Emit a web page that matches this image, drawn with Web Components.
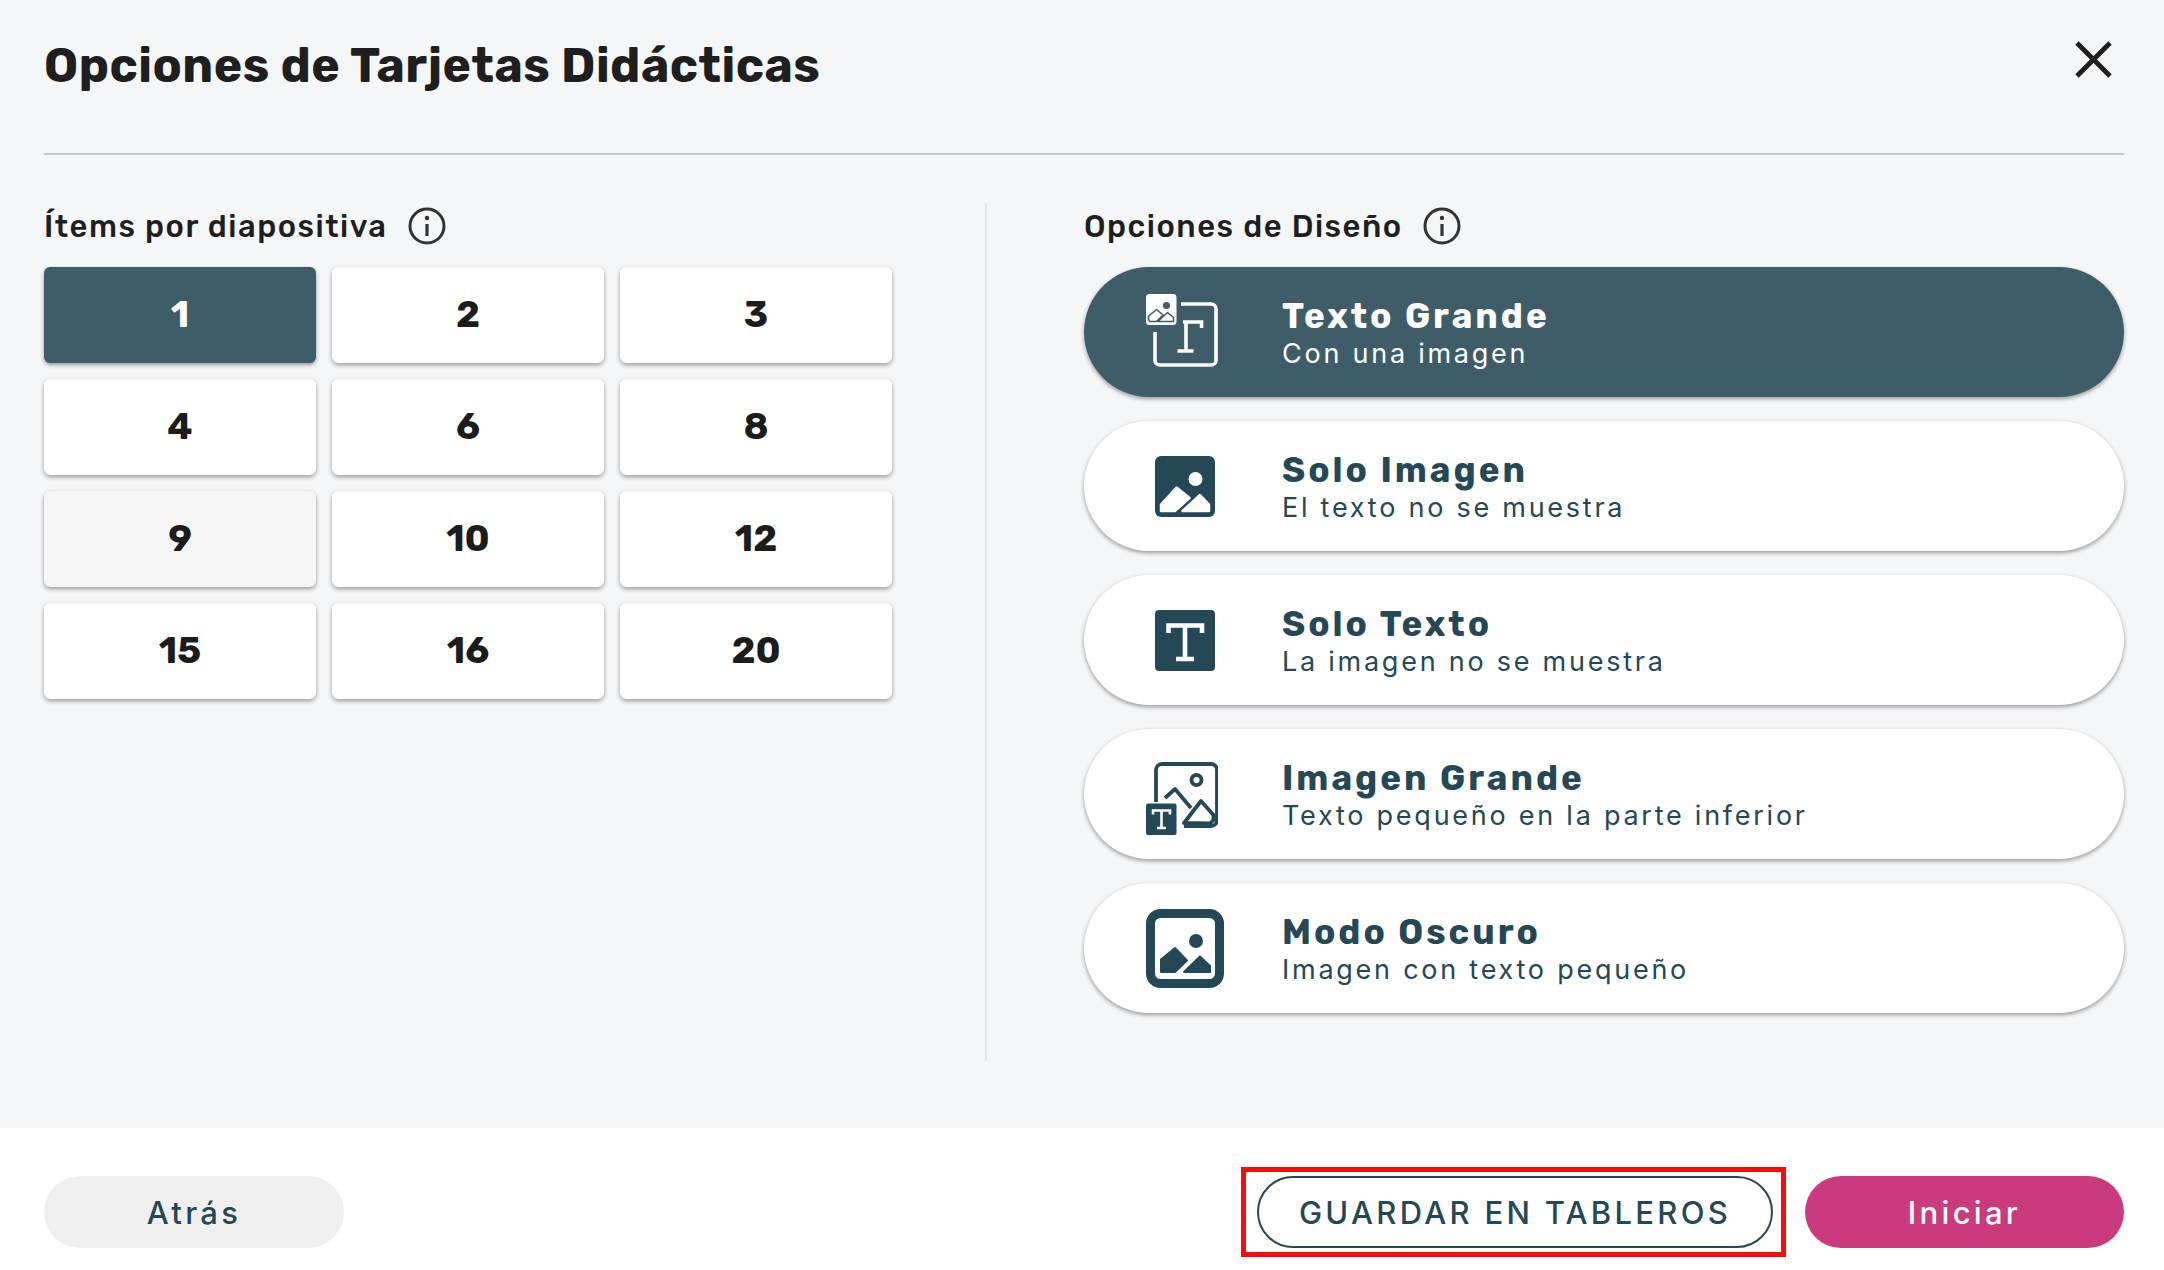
<!doctype html>
<html lang="es">
<head>
<meta charset="utf-8">
<title>Opciones de Tarjetas Didácticas</title>
<style>
  html, body { margin: 0; height: 100%; }
  body { font-family: Inter, "Liberation Sans", sans-serif; }
</style>
</head>
<body>
<flash-dialog>
  <span slot="title">Opciones de Tarjetas Didácticas</span>
  <flash-section slot="left" label="Ítems por diapositiva">
    <count-grid>
      <count-tile selected>1</count-tile>
      <count-tile>2</count-tile>
      <count-tile>3</count-tile>
      <count-tile>4</count-tile>
      <count-tile>6</count-tile>
      <count-tile>8</count-tile>
      <count-tile hover>9</count-tile>
      <count-tile>10</count-tile>
      <count-tile>12</count-tile>
      <count-tile>15</count-tile>
      <count-tile>16</count-tile>
      <count-tile>20</count-tile>
    </count-grid>
  </flash-section>
  <flash-section slot="right" label="Opciones de Diseño">
    <layout-list>
      <layout-pill selected heading="Texto Grande" sub="Con una imagen">
        <svg slot="icon" style="margin: 0 0 3px -6px" width="72" height="74" viewBox="0 0 72 74" fill="none">
          <path d="M35 10H65a5 5 0 0 1 5 5V66a5 5 0 0 1-5 5H14a5 5 0 0 1-5-5V38" stroke="#fff" stroke-width="3.6"/>
          <path d="M37 28H55.5V34M40 28V57M31.5 57H47.5" stroke="#fff" stroke-width="3.6"/>
          <rect width="30.5" height="31" rx="3.5" fill="#fff"/>
          <circle cx="20.5" cy="11.5" r="3.6" fill="#3f5d69"/>
          <path d="M2.5 25V22L10.5 15.5 17 21 10.5 27.5H3.5ZM12 27.5 21.5 18.5 27.5 23.5V27.5Z" fill="none" stroke="#3f5d69" stroke-width="1.6" stroke-linejoin="round"/>
        </svg>
      </layout-pill>
      <layout-pill heading="Solo Imagen" sub="El texto no se muestra">
        <svg slot="icon" width="60" height="61" viewBox="0 0 60 61">
          <rect width="60" height="61" rx="6" fill="#244855"/>
          <circle cx="40.5" cy="23" r="7" fill="#fff"/>
          <path d="M6 55V48.5L21.5 31.5 34.5 42 20 55ZM27.5 55 45 39 54 48.5V55Z" fill="#fff" stroke="#fff" stroke-width="2.5" stroke-linejoin="round"/>
        </svg>
      </layout-pill>
      <layout-pill heading="Solo Texto" sub="La imagen no se muestra">
        <svg slot="icon" width="60" height="61" viewBox="0 0 60 61">
          <rect width="60" height="61" rx="4" fill="#244855"/>
          <path d="M13.5 23V15.5H47V23M30 15.5V49M21 49H39" fill="none" stroke="#fff" stroke-width="4.6"/>
        </svg>
      </layout-pill>
      <layout-pill heading="Imagen Grande" sub="Texto pequeño en la parte inferior">
        <svg slot="icon" style="margin: 8px 0 0 -6px" width="72" height="73" viewBox="0 0 72 73" fill="none">
          <path d="M10 40V8a6 6 0 0 1 6-6H65a6 6 0 0 1 6 6V58a6 6 0 0 1-6 6H38" stroke="#244855" stroke-width="3.8"/>
          <circle cx="50.5" cy="18" r="5" stroke="#244855" stroke-width="3.8"/>
          <path d="M19 36 29 27 45 46M38 61 55 39 67.5 53V58L64 61.5Z" stroke="#244855" stroke-width="3.8" stroke-linejoin="round"/>
          <rect y="41.5" width="30.5" height="31.5" rx="2" fill="#244855"/>
          <path d="M7 52.5V48.5H24V52.5M15.5 48.5V66M11 66H20" stroke="#fff" stroke-width="2.6"/>
        </svg>
      </layout-pill>
      <layout-pill heading="Modo Oscuro" sub="Imagen con texto pequeño">
        <svg slot="icon" width="78" height="79" viewBox="0 0 78 79">
          <rect x="4.5" y="4.5" width="69" height="70" rx="10" fill="#fff" stroke="#244855" stroke-width="9"/>
          <circle cx="50" cy="32" r="7" fill="#244855"/>
          <path d="M15 63V50.5L29 39 41 51.5 29 63ZM38 63 54 47.5 64 57V63Z" fill="#244855" stroke="#244855" stroke-width="2" stroke-linejoin="round"/>
        </svg>
      </layout-pill>
    </layout-list>
  </flash-section>
  <app-button slot="back" variant="ghost">Atrás</app-button>
  <marked-box slot="actions"><app-button variant="outline" upper>GUARDAR EN TABLEROS</app-button></marked-box>
  <app-button slot="actions" variant="primary">Iniciar</app-button>
</flash-dialog>

<script>
const HEAD_FONT = 'Rubik, Roboto, Inter, "Liberation Sans", sans-serif'

class FlashDialog extends HTMLElement {
  constructor() {
    super()
    this.attachShadow({ mode: 'open' }).innerHTML = `
      <style>
        :host {
          display: grid;
          grid-template-rows: 1fr 142px;
          width: 2164px;
          height: 1270px;
          background: #f5f6f8;
          overflow: hidden;
        }
        .main { padding: 0 40px 0 44px; display: flex; flex-direction: column; }
        header {
          height: 155px;
          box-sizing: border-box;
          border-bottom: 2px solid #c3c5c8;
          display: flex;
          justify-content: space-between;
          align-items: flex-start;
          font: 700 48px ${HEAD_FONT};
          letter-spacing: .5px;
          color: #1f1f1f;
          padding-top: 37px;
        }
        header svg { margin: 4px 12px 0 0; }
        .columns {
          margin-top: 48px;
          display: grid;
          grid-template-columns: 943px 1fr;
          height: 858px;
        }
        .left { border-right: 2px solid #e3e4e6; padding-right: 93px; }
        .right { padding-left: 97px; }
        footer {
          background: #fff;
          padding: 39px 40px 0 44px;
          display: flex;
          align-items: flex-start;
          justify-content: space-between;
        }
        .actions { display: flex; gap: 19px; align-items: center; }
        ::slotted(app-button[slot="back"]) { margin-top: 9px; }
      </style>
      <div class="main">
        <header>
          <slot name="title"></slot>
          <svg width="37" height="37" viewBox="0 0 37 37"><path d="M2 2 35 35M35 2 2 35" stroke="#1f1f1f" stroke-width="4.8" fill="none"/></svg>
        </header>
        <div class="columns">
          <div class="left"><slot name="left"></slot></div>
          <div class="right"><slot name="right"></slot></div>
        </div>
      </div>
      <footer>
        <slot name="back"></slot>
        <div class="actions"><slot name="actions"></slot></div>
      </footer>`
  }
}

class FlashSection extends HTMLElement {
  constructor() {
    super()
    const root = this.attachShadow({ mode: 'open' })
    root.innerHTML = `
      <style>
        :host { display: block; }
        .label {
          height: 64px;
          display: flex;
          align-items: flex-start;
          gap: 20px;
          font: 500 31px/48px ${HEAD_FONT};
          letter-spacing: 1.5px;
          color: #1f1f1f;
        }
        svg { margin-top: 4px; }
      </style>
      <div class="label">
        <span></span>
        <svg width="38" height="38" viewBox="0 0 38 38" fill="none">
          <circle cx="19" cy="19" r="17" stroke="#333" stroke-width="3"/>
          <path d="M19 17V29" stroke="#333" stroke-width="3.2"/>
          <circle cx="19" cy="11" r="2.2" fill="#333"/>
        </svg>
      </div>
      <slot></slot>`
    root.querySelector('span').textContent = this.getAttribute('label')
  }
}

class CountGrid extends HTMLElement {
  constructor() {
    super()
    this.attachShadow({ mode: 'open' }).innerHTML = `
      <style>
        :host { display: grid; grid-template-columns: repeat(3, 272px); grid-auto-rows: 96px; gap: 16px; }
      </style>
      <slot></slot>`
  }
}

class CountTile extends HTMLElement {
  constructor() {
    super()
    this.attachShadow({ mode: 'open' }).innerHTML = `
      <style>
        :host {
          display: flex;
          align-items: center;
          justify-content: center;
          padding-bottom: 2px;
          box-sizing: border-box;
          background: #fff;
          border-radius: 6px;
          box-shadow: 0 2px 4px rgba(0, 0, 0, .38);
          font: 700 37px ${HEAD_FONT};
          color: #1c1c1c;
        }
        :host([selected]) { background: #3f5d69; color: #fff; }
        :host([hover]) { background: #f5f5f5; }
      </style>
      <slot></slot>`
  }
}

class LayoutList extends HTMLElement {
  constructor() {
    super()
    this.attachShadow({ mode: 'open' }).innerHTML = `
      <style>:host { display: flex; flex-direction: column; gap: 24px; }</style>
      <slot></slot>`
  }
}

class LayoutPill extends HTMLElement {
  constructor() {
    super()
    const root = this.attachShadow({ mode: 'open' })
    root.innerHTML = `
      <style>
        :host {
          display: grid;
          grid-template-columns: 198px 1fr;
          height: 130px;
          border-radius: 65px;
          background: #fff;
          color: #244855;
          box-shadow: 0 2px 4px rgba(0, 0, 0, .38);
        }
        :host([selected]) { background: #3f5d69; color: #fff; }
        .icon { display: flex; align-items: center; justify-content: center; padding-left: 3px; }
        .text { align-self: center; display: flex; flex-direction: column; margin-top: 3px; }
        b { font: 700 35px/40px ${HEAD_FONT}; letter-spacing: 3px; }
        small { font: 400 27px/35px Inter, "Liberation Sans", sans-serif; letter-spacing: 2.75px; }
      </style>
      <div class="icon"><slot name="icon"></slot></div>
      <div class="text"><b></b><small></small></div>`
    root.querySelector('b').textContent = this.getAttribute('heading')
    root.querySelector('small').textContent = this.getAttribute('sub')
  }
}

class AppButton extends HTMLElement {
  constructor() {
    super()
    this.attachShadow({ mode: 'open' }).innerHTML = `
      <style>
        :host {
          display: flex;
          align-items: center;
          justify-content: center;
          box-sizing: border-box;
          height: 72px;
          border-radius: 36px;
          font: 500 31px Inter, "Liberation Sans", sans-serif;
          letter-spacing: 3.3px;
          color: #244855;
        }
        :host([variant="ghost"]) { width: 300px; background: #efefef; }
        :host([variant="outline"]) { width: 516px; background: #fff; border: 2px solid #244855; }
        :host([variant="primary"]) { width: 319px; background: #cb3a7d; color: #fff; }
      </style>
      <slot></slot>`
  }
}

class MarkedBox extends HTMLElement {
  constructor() {
    super()
    this.attachShadow({ mode: 'open' }).innerHTML = `
      <style>:host { display: block; border: 5px solid #ff0a0a; padding: 4px 8px 4px 11px; }</style>
      <slot></slot>`
  }
}

customElements.define('flash-dialog', FlashDialog)
customElements.define('flash-section', FlashSection)
customElements.define('count-grid', CountGrid)
customElements.define('count-tile', CountTile)
customElements.define('layout-list', LayoutList)
customElements.define('layout-pill', LayoutPill)
customElements.define('app-button', AppButton)
customElements.define('marked-box', MarkedBox)
</script>
</body>
</html>
